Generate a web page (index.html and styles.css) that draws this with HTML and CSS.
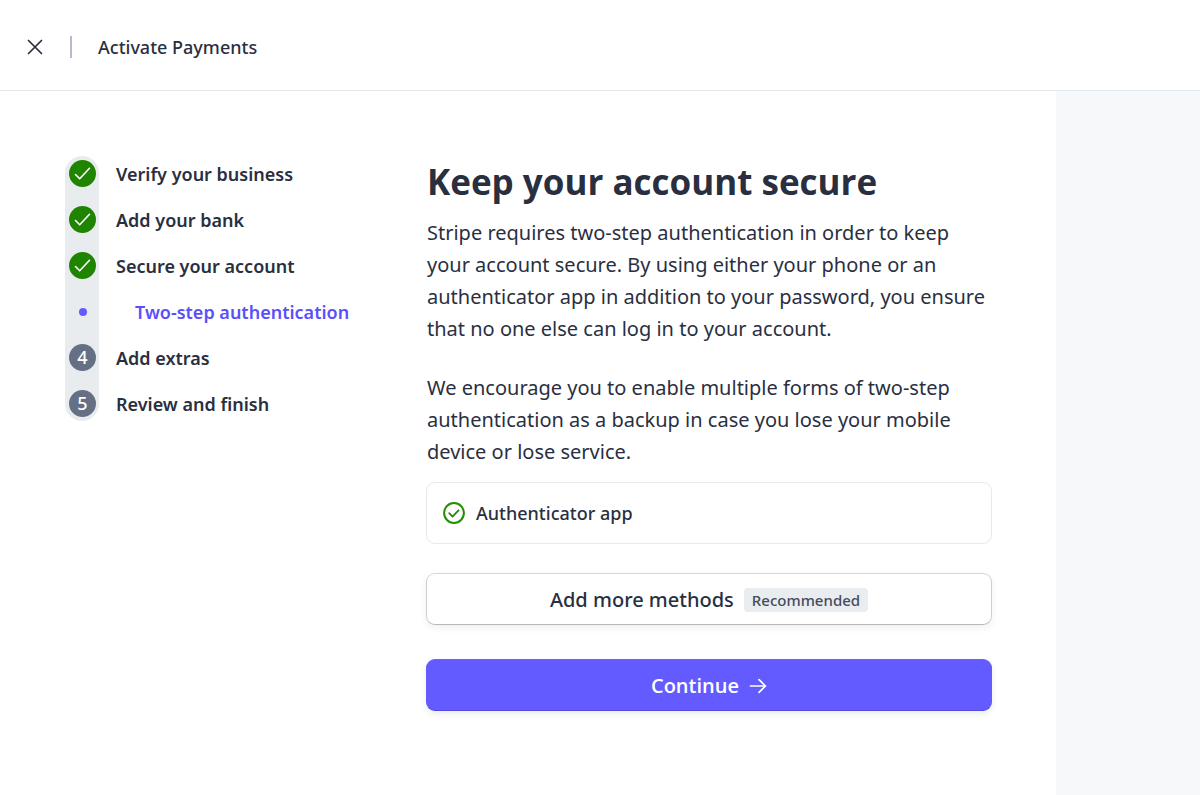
FILE: index.html
```html
<!DOCTYPE html>
<html lang="en">
<head>
<meta charset="utf-8">
<meta name="viewport" content="width=device-width, initial-scale=1">
<title>Activate Payments</title>
<link rel="stylesheet" href="styles.css">
</head>
<body>
<header class="topbar">
  <button class="close" type="button" aria-label="Close">
    <svg width="16" height="16" viewBox="0 0 16 16" fill="none" stroke="currentColor" stroke-width="1.7" stroke-linecap="round"><path d="M1.5 1.5l13 13M14.5 1.5l-13 13"/></svg>
  </button>
  <span class="divider"></span>
  <span class="topbar-title">Activate Payments</span>
</header>
<div class="layout">
  <nav class="sidebar" aria-label="Progress">
    <ol class="steps">
      <li class="step"><span class="marker done"><svg width="27" height="27" viewBox="0 0 27 27"><path d="M6.5 14.5l4.2 4.3L20.5 8.3"/></svg></span><span class="label">Verify your business</span></li>
      <li class="step"><span class="marker done"><svg width="27" height="27" viewBox="0 0 27 27"><path d="M6.5 14.5l4.2 4.3L20.5 8.3"/></svg></span><span class="label">Add your bank</span></li>
      <li class="step"><span class="marker done"><svg width="27" height="27" viewBox="0 0 27 27"><path d="M6.5 14.5l4.2 4.3L20.5 8.3"/></svg></span><span class="label">Secure your account</span></li>
      <li class="step current" aria-current="step"><span class="marker"><span class="dot"></span></span><span class="label">Two-step authentication</span></li>
      <li class="step"><span class="marker todo">4</span><span class="label">Add extras</span></li>
      <li class="step"><span class="marker todo">5</span><span class="label">Review and finish</span></li>
    </ol>
  </nav>
  <main class="content">
    <h1 class="title">Keep your account secure</h1>
    <p class="text">Stripe requires two-step authentication in order to keep your account secure. By using either your phone or an authenticator app in addition to your password, you ensure that no one else can log in to your account.</p>
    <p class="text">We encourage you to enable multiple forms of two-step authentication as a backup in case you lose your mobile device or lose service.</p>
    <div class="method">
      <svg width="22" height="22" viewBox="0 0 22 22" fill="none" stroke="currentColor" stroke-linecap="round" stroke-linejoin="round"><circle cx="11" cy="11" r="9.9" stroke-width="2"/><path d="M6.2 11.2l3.3 3.4 6-6.3" stroke-width="1.8"/></svg>
      <span class="method-name">Authenticator app</span>
    </div>
    <button class="button secondary" type="button"><span>Add more methods</span><span class="badge">Recommended</span></button>
    <button class="button primary" type="button"><span>Continue</span><svg width="18" height="16" viewBox="0 0 18 16" fill="none" stroke="currentColor" stroke-width="1.7" stroke-linecap="round" stroke-linejoin="round"><path d="M1.5 8h15M10 1.7L16.5 8 10 14.3"/></svg></button>
  </main>
  <aside class="panel"></aside>
</div>
</body>
</html>
```
FILE: styles.css
```css
* {
  box-sizing: border-box;
}

body {
  margin: 0;
  min-height: 100vh;
  display: flex;
  flex-direction: column;
  background: #fff;
  color: #2a2f3f;
  font-family: "Segoe UI", "Noto Sans", sans-serif;
  font-size: 18px;
}

button {
  font: inherit;
  color: inherit;
  cursor: pointer;
}

.topbar {
  display: flex;
  align-items: center;
  padding: 34px 27px 30px;
  border-bottom: 1px solid #e3e8ee;
}

.close {
  display: flex;
  padding: 0;
  border: 0;
  background: none;
}

.divider {
  width: 2px;
  height: 22px;
  margin: 0 26px 0 27px;
  background: #b4bccb;
}

.topbar-title {
  line-height: 26px;
  font-weight: 500;
}

.layout {
  flex: 1;
  display: flex;
}

.sidebar {
  flex: 0 0 426px;
  padding: 65px 0 0 65px;
}

.steps {
  position: relative;
  display: flex;
  flex-direction: column;
  gap: 19px;
  margin: 0;
  padding: 4px;
  list-style: none;
}

.steps::before {
  content: "";
  position: absolute;
  z-index: -1;
  top: 0;
  bottom: 0;
  left: 0;
  width: 34px;
  border-radius: 17px;
  background: #e8ecef;
}

.step {
  display: flex;
  align-items: center;
  gap: 20px;
  height: 27px;
  line-height: 27px;
  font-weight: 600;
}

.label {
  padding-top: 2px;
}

.current {
  gap: 39px;
  color: #5b4ffb;
}

.marker {
  flex: none;
  display: flex;
  align-items: center;
  justify-content: center;
  width: 27px;
  height: 27px;
  border-radius: 50%;
}

.done {
  background: #1f8500;
}

.done path {
  fill: none;
  stroke: #fff;
  stroke-width: 1.6;
  stroke-linecap: round;
  stroke-linejoin: round;
}

.todo {
  background: #667085;
  color: #fff;
  font-weight: 500;
}

.dot {
  width: 8px;
  height: 8px;
  border-radius: 50%;
  background: #635bff;
}

.content {
  flex: 1;
  min-width: 0;
  display: flex;
  flex-direction: column;
  padding: 64px 64px 84px 0;
}

.title {
  margin: 0;
  padding: 0 1px;
  font-family: "Segoe UI", "Open Sans", sans-serif;
  font-size: 35px;
  line-height: 54px;
  font-weight: 700;
}

.text {
  margin: 8px 0 0;
  padding: 0 1px;
  font-size: 20px;
  line-height: 32px;
}

.text + .text {
  margin-top: 27px;
}

.method {
  display: flex;
  align-items: center;
  gap: 11px;
  margin-top: 14px;
  padding: 16px;
  border: 1px solid #e6e9ee;
  border-radius: 9px;
  color: #228f00;
}

.method-name {
  color: #2a2f3f;
  line-height: 28px;
  font-weight: 500;
}

.button {
  display: flex;
  align-items: center;
  justify-content: center;
  gap: 10px;
  padding: 10px 9px 8px;
  border: 1px solid;
  border-radius: 9px;
  font-size: 20px;
  line-height: 32px;
}

.secondary {
  margin-top: 29px;
  border-color: #d6d6d9 #cfcfd3 #b9b9bd;
  background: #fff;
  box-shadow: 0 3px 7px rgb(60 66 87 / 8%);
  font-weight: 500;
}

.badge {
  padding: 0 8px;
  border-radius: 4px;
  background: #e9edf0;
  color: #454c5c;
  font-size: 15px;
  line-height: 24px;
}

.primary {
  margin-top: 34px;
  border-color: #6a61ff #635bff #5149e0;
  background: #635bff;
  box-shadow: 0 3px 7px rgb(60 66 87 / 10%);
  color: #fff;
  font-family: "Segoe UI", "Open Sans", sans-serif;
  font-weight: 600;
}

.panel {
  flex: 0 0 12%;
  background: #f6f8fa;
}
```
